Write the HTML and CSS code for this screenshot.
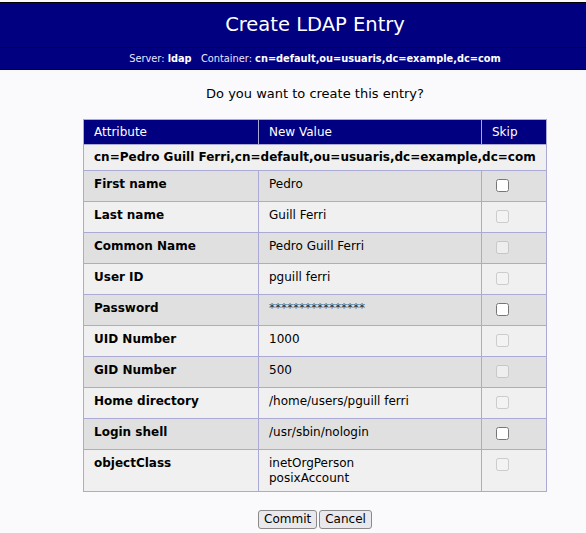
FILE: index.html
```html
<!DOCTYPE html>
<html>
<head>
<meta charset="utf-8">
<link rel="stylesheet" href="styles.css">
</head>
<body>
<div class="page">
<div class="head">
  <h1 class="title">Create LDAP Entry</h1>
  <div class="sub">Server: <b>ldap</b>&nbsp;&nbsp; Container: <b>cn=default,ou=usuaris,dc=example,dc=com</b></div>
</div>
<p class="question">Do you want to create this entry?</p>
<form class="form">
<table class="entry">
  <thead>
    <tr><th class="c1">Attribute</th><th class="c2">New Value</th><th class="c3">Skip</th></tr>
  </thead>
  <tbody>
    <tr class="dn"><td colspan="3">cn=Pedro Guill Ferri,cn=default,ou=usuaris,dc=example,dc=com</td></tr>
    <tr class="even"><td class="attr">First name</td><td>Pedro</td><td class="skip"><input type="checkbox"></td></tr>
    <tr class="odd"><td class="attr">Last name</td><td>Guill Ferri</td><td class="skip"><input type="checkbox" disabled></td></tr>
    <tr class="even"><td class="attr">Common Name</td><td>Pedro Guill Ferri</td><td class="skip"><input type="checkbox" disabled></td></tr>
    <tr class="odd"><td class="attr">User ID</td><td>pguill ferri</td><td class="skip"><input type="checkbox" disabled></td></tr>
    <tr class="even"><td class="attr">Password</td><td class="pw">****************</td><td class="skip"><input type="checkbox"></td></tr>
    <tr class="odd"><td class="attr">UID Number</td><td>1000</td><td class="skip"><input type="checkbox" disabled></td></tr>
    <tr class="even"><td class="attr">GID Number</td><td>500</td><td class="skip"><input type="checkbox" disabled></td></tr>
    <tr class="odd"><td class="attr">Home directory</td><td>/home/users/pguill ferri</td><td class="skip"><input type="checkbox" disabled></td></tr>
    <tr class="even"><td class="attr">Login shell</td><td>/usr/sbin/nologin</td><td class="skip"><input type="checkbox"></td></tr>
    <tr class="odd"><td class="attr">objectClass</td><td>inetOrgPerson<br>posixAccount</td><td class="skip"><input type="checkbox" disabled></td></tr>
  </tbody>
</table>
<div class="buttons"><button type="button" class="btn">Commit</button><button type="button" class="btn">Cancel</button></div>
</form>
</div>
</body>
</html>
```
FILE: styles.css
```css
html, body {
  margin: 0;
  padding: 0;
  background: #fafafc;
  font-family: "DejaVu Sans", sans-serif;
  color: #000;
  overflow: hidden;
}
.page {
  width: 630px;
}
.head {
  margin-top: 2px;
  border-top: 1px solid #000;
  background: #000080;
  color: #fff;
}
.title {
  margin: 0;
  height: 44px;
  line-height: 44px;
  font-size: 19.5px;
  font-weight: normal;
  text-align: center;
  border-bottom: 1px solid #000;
}
.sub {
  height: 21px;
  line-height: 21px;
  font-size: 9.8px;
  text-align: center;
  border-bottom: 1px solid #000;
  color: #e8e8ff;
}
.sub b { color: #fff; }
.question {
  margin: 16px 0 18px;
  text-align: center;
  font-size: 13px;
}
.form { margin: 0; }
.entry {
  margin: 0 auto;
  border-collapse: collapse;
  width: 464px;
  font-size: 12px;
  line-height: 15px;
  border: 1px solid #aaaad4;
}
.entry th {
  background: #000080;
  color: #fff;
  font-weight: normal;
  text-align: left;
  height: 25px;
  padding: 0 10px;
  border-left: 1px solid #aaaad4;
  box-sizing: border-box;
}
.c1 { width: 175px; }
.c2 { width: 223px; }
.entry td {
  border: 1px solid #aaaad4;
  vertical-align: top;
  padding: 6px 10px 5px;
  height: 31px;
  box-sizing: border-box;
}
.dn td {
  background: #f0f0f0;
  font-weight: bold;
  font-size: 12px;
  white-space: nowrap;
  height: 26px;
  padding: 5px 10px 0;
}
.even td { background: #e0e0e0; }
.odd td { background: #f0f0f0; }
.attr { font-weight: bold; }
.pw { color: #333; }
.entry td.skip { padding: 6px 0 0 14px; }
.skip input { display: block; margin: 2px 0 0 0; width: 13px; height: 13px; }
.buttons {
  margin-top: 18px;
  text-align: center;
  font-size: 0;
}
.btn {
  font-family: "DejaVu Sans", sans-serif;
  font-size: 12px;
  line-height: 15px;
  margin: 0 1px;
  padding: 1px 5px;
  border: 1px solid #8a8a8a;
  border-radius: 3px;
  background: #e9e9ed;
  color: #000;
}
```
